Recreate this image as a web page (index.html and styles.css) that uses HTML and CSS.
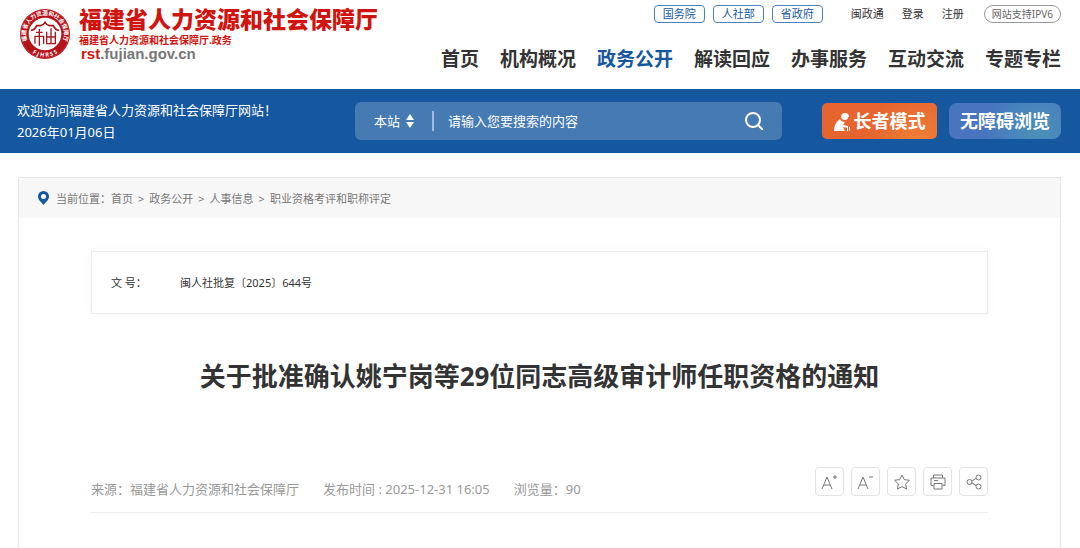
FILE: index.html
```html
<!DOCTYPE html>
<html lang="zh-CN">
<head>
    <meta charset="UTF-8">
    <meta name="viewport" content="width=device-width, initial-scale=1.0">
    <title>福建省人力资源和社会保障厅</title>
    <link rel="stylesheet" href="styles.css">
</head>
<body>
    <header class="header">
        <a class="logo" href="#">
            <svg class="seal" viewBox="0 0 150 150" aria-hidden="true">
                <defs>
                    <path id="arcTop" d="M27 106 A57 57 0 1 1 123 106"/>
                    <path id="arcBottom" d="M8 87 A68 68 0 0 0 142 87"/>
                </defs>
                <circle cx="75" cy="75" r="75" fill="#b5131a"/>
                <circle cx="75" cy="75" r="72" fill="none" stroke="#d8686c" stroke-width="1"/>
                <circle cx="75" cy="75" r="49" fill="#fff"/>
                <text class="seal-text"><textPath href="#arcTop" startOffset="50%" text-anchor="middle">福建省人力资源和社会保障厅</textPath></text>
                <text class="seal-text"><textPath href="#arcBottom" startOffset="50%" text-anchor="middle">F J H R S S</textPath></text>
                <g fill="none" stroke="#a5161b" stroke-width="4">
                    <path d="M33 64 Q44 64 50 50 H62 Q70 48 75 40 Q80 48 88 50 H100 Q106 64 117 64" stroke-width="5"/>
                    <path d="M48 70 H68 M58 60 V110 M45 104 V82 H71 V104"/>
                    <path d="M80 68 V104 H106 V68 M93 58 V104 M80 84 H106"/>
                </g>
            </svg>
            <span class="logo-text">
                <span class="logo-name">福建省人力资源和社会保障厅</span>
                <span class="logo-sub">福建省人力资源和社会保障厅.政务</span>
                <span class="logo-url"><b>rst</b>.fujian.gov.cn</span>
            </span>
        </a>
        <div class="header-right">
            <div class="top-links">
                <a class="tag" href="#">国务院</a>
                <a class="tag" href="#">人社部</a>
                <a class="tag" href="#">省政府</a>
                <div class="user-links">
                    <a href="#">闽政通</a>
                    <a href="#">登录</a>
                    <a href="#">注册</a>
                </div>
                <span class="ipv6">网站支持IPV6</span>
            </div>
            <nav class="nav">
                <a href="#">首页</a>
                <a href="#">机构概况</a>
                <a class="active" href="#">政务公开</a>
                <a href="#">解读回应</a>
                <a href="#">办事服务</a>
                <a href="#">互动交流</a>
                <a href="#">专题专栏</a>
            </nav>
        </div>
    </header>

    <div class="banner">
        <div class="welcome">
            <p>欢迎访问福建省人力资源和社会保障厅网站！</p>
            <p>2026年01月06日</p>
        </div>
        <form class="search">
            <select class="scope" aria-label="搜索范围">
                <option>本站</option>
            </select>
            <svg class="arrows" viewBox="0 0 8 14" aria-hidden="true"><path d="M4 0 L8 6 H0 Z M0 8 H8 L4 14 Z" fill="#fff"/></svg>
            <input type="text" class="keyword" placeholder="请输入您要搜索的内容" aria-label="搜索内容">
            <button type="submit" class="search-btn" aria-label="搜索">
                <svg viewBox="0 0 18 18"><circle cx="8" cy="8" r="7" fill="none" stroke="#fff" stroke-width="2"/><path d="M13 13 L17 17" stroke="#fff" stroke-width="2" stroke-linecap="round"/></svg>
            </button>
        </form>
        <div class="modes">
            <button type="button" class="mode elder">
                <svg viewBox="0 0 16 18" aria-hidden="true">
                    <path d="M7 3 Q8 0 11 0 Q15 0 15 4 L14 4 Q14 7 11 7 Q8 7 7 4 Z" fill="#fff"/>
                    <path d="M0 18 Q0 10 6 6 Q7 9 11 9 L9 12 L14 13 L14 15 L9 14 L11 18 Z" fill="#fff"/>
                    <path d="M13.500 18 V14 M15.500 18 V14" fill="none" stroke="#fff"/>
                </svg>
                长者模式
            </button>
            <button type="button" class="mode barrier-free">无障碍浏览</button>
        </div>
    </div>

    <main class="content">
        <div class="crumbs">
            <svg class="pin" viewBox="0 0 11 14" aria-hidden="true"><path d="M5.500 0 A5.500 5.500 0 0 1 11 5.500 C11 9 7 12 5.500 14 C4 12 0 9 0 5.500 A5.500 5.500 0 0 1 5.500 0 Z" fill="#15589f"/><circle cx="5.500" cy="5.500" r="2.500" fill="#fff"/></svg>
            <span>当前位置：<a href="#">首页</a></span>
            <span>&gt;</span>
            <a href="#">政务公开</a>
            <span>&gt;</span>
            <a href="#">人事信息</a>
            <span>&gt;</span>
            <a href="#">职业资格考评和职称评定</a>
        </div>
        <article class="article">
            <dl class="doc-no">
                <dt>文 号：</dt>
                <dd>闽人社批复〔2025〕644号</dd>
            </dl>
            <h1>关于批准确认姚宁岗等29位同志高级审计师任职资格的通知</h1>
            <div class="meta">
                <div class="info">
                    <span>来源：福建省人力资源和社会保障厅</span>
                    <span>发布时间 : 2025-12-31 16:05</span>
                    <span>浏览量：90</span>
                </div>
                <div class="tools">
                    <button type="button" aria-label="放大字体"><svg viewBox="0 0 18 18"><path d="M1 16 L6 4 L11 16 M3 12 H9 M12 4 H16 M14 2 V6"/></svg></button>
                    <button type="button" aria-label="缩小字体"><svg viewBox="0 0 18 18"><path d="M1 16 L6 4 L11 16 M3 12 H9 M12 4 H16"/></svg></button>
                    <button type="button" aria-label="收藏"><svg viewBox="0 0 18 18"><path d="M9 2 L11.300 6.600 L16.400 7.300 L12.700 10.900 L13.600 16 L9 13.600 L4.400 16 L5.300 10.900 L1.600 7.300 L6.700 6.600 Z"/></svg></button>
                    <button type="button" aria-label="打印"><svg viewBox="0 0 18 18"><path d="M4.500 5 V2 H13.500 V5 M4.500 12.500 H2 V5 H16 V12.500 H13.500 M5 10.500 H13 V16 H5 Z M5 7.500 H9"/></svg></button>
                    <button type="button" aria-label="分享"><svg viewBox="0 0 18 18"><circle cx="4.500" cy="9" r="2.500"/><circle cx="13.500" cy="4.500" r="2.500"/><circle cx="13.500" cy="13.500" r="2.500"/><path d="M7 8 L11 5.500 M7 10 L11 12.500"/></svg></button>
                </div>
            </div>
        </article>
    </main>
</body>
</html>
```
FILE: styles.css
```css
* { margin: 0; padding: 0; box-sizing: border-box; }
body { font-family: "Noto Sans", "Noto Sans CJK SC", sans-serif; font-size: 13px; color: #333; background: #fff; }
a { color: inherit; text-decoration: none; }
button, input, select { font-family: inherit; border: none; background: none; color: inherit; }
button { cursor: pointer; }

/* header */
.header { display: flex; justify-content: space-between; height: 89px; padding: 5px 19px 0 20px; }
.logo { display: flex; align-items: flex-start; gap: 9px; }
.seal { width: 50px; height: 50px; margin-top: 4px; }
.seal-text { font-size: 17px; font-weight: 700; fill: #fff; }
.logo-text { display: flex; flex-direction: column; }
.logo-name { font-size: 23px; line-height: 28px; font-weight: 900; color: #d0140f; }
.logo-sub { font-size: 10px; line-height: 14px; font-weight: 700; color: #d0140f; }
.logo-url { padding-left: 2px; font-family: "Liberation Sans", Arial, sans-serif; font-size: 15px; line-height: 14px; font-weight: 700; color: #777; }
.logo-url b { color: #d0140f; }
.header-right { display: flex; flex-direction: column; align-items: flex-end; gap: 21px; }
.top-links { display: flex; align-items: center; gap: 8px; font-size: 11px; line-height: 16px; }
.tag { width: 51px; border: 1px solid #4a80bd; border-radius: 4px; text-align: center; color: #15589f; }
.user-links { display: flex; gap: 18px; padding: 0 12px 0 20px; }
.ipv6 { padding: 0 7px; border: 1px solid #999; border-radius: 9px; font-size: 10px; color: #666; }
.nav { display: flex; gap: 21px; font-size: 19px; line-height: 30px; font-weight: 700; }
.nav .active { color: #15589f; }

/* blue bar */
.banner { display: flex; align-items: center; height: 64px; padding: 0 19px 0 17px; background: #15589f; color: #fff; }
.welcome { width: 338px; line-height: 22px; }
.search { display: flex; flex: 1; align-items: center; height: 38px; padding: 0 16px 0 19px; border-radius: 6px; background: #467ab3; }
.scope { appearance: none; width: 32px; font-size: 13px; }
.arrows { width: 8px; height: 14px; }
.keyword { flex: 1; min-width: 0; height: 20px; margin-left: 18px; padding-left: 14px; border-left: 2px solid #a2bcd9; font-size: 13px; outline: none; }
.keyword::placeholder { color: #fff; }
.search-btn { width: 24px; height: 24px; }
.search-btn svg { display: block; width: 18px; height: 18px; margin: auto; }
.modes { display: flex; gap: 12px; margin-left: 40px; }
.mode { display: flex; align-items: center; justify-content: center; height: 36px; padding-bottom: 2px; border-radius: 5px; font-size: 18px; font-weight: 700; }
.elder { gap: 4px; width: 115px; background: radial-gradient(circle at 85% 110%, #ee8038, #e66430 50%); }
.elder svg { width: 16px; height: 18px; margin-top: 4px; }
.barrier-free { width: 112px; border-radius: 8px; background: radial-gradient(circle at 80% 75%, #4a92b8, #4874c0 60%); }

/* article */
.content { margin: 24px 19px 0 18px; border: 1px solid #e6e6e6; border-bottom: none; }
.crumbs { display: flex; align-items: center; gap: 5px; height: 40px; padding-left: 19px; background: #f7f7f7; font-size: 11px; color: #777; }
.pin { width: 11px; height: 14px; margin-right: 2px; }
.article { padding: 33px 72px 36px; }
.doc-no { display: flex; align-items: center; height: 63px; padding: 0 19px 2px; border: 1px solid #ececec; box-shadow: 0 0 10px rgba(0,0,0,0.04); font-size: 11px; }
.doc-no dt { width: 69px; }
h1 { margin-top: 42px; font-size: 26px; line-height: 40px; text-align: center; }
.meta { display: flex; align-items: center; justify-content: space-between; margin-top: 69px; padding-bottom: 14px; border-bottom: 1px solid #ececec; color: #999; }
.info { display: flex; gap: 24px; padding-top: 14px; }
.tools { display: flex; gap: 7px; }
.tools button { display: flex; align-items: center; justify-content: center; width: 29px; height: 29px; border: 1px solid #e2e2e2; border-radius: 4px; }
.tools svg { width: 18px; height: 18px; fill: none; stroke: #777; stroke-width: 1; }
```
